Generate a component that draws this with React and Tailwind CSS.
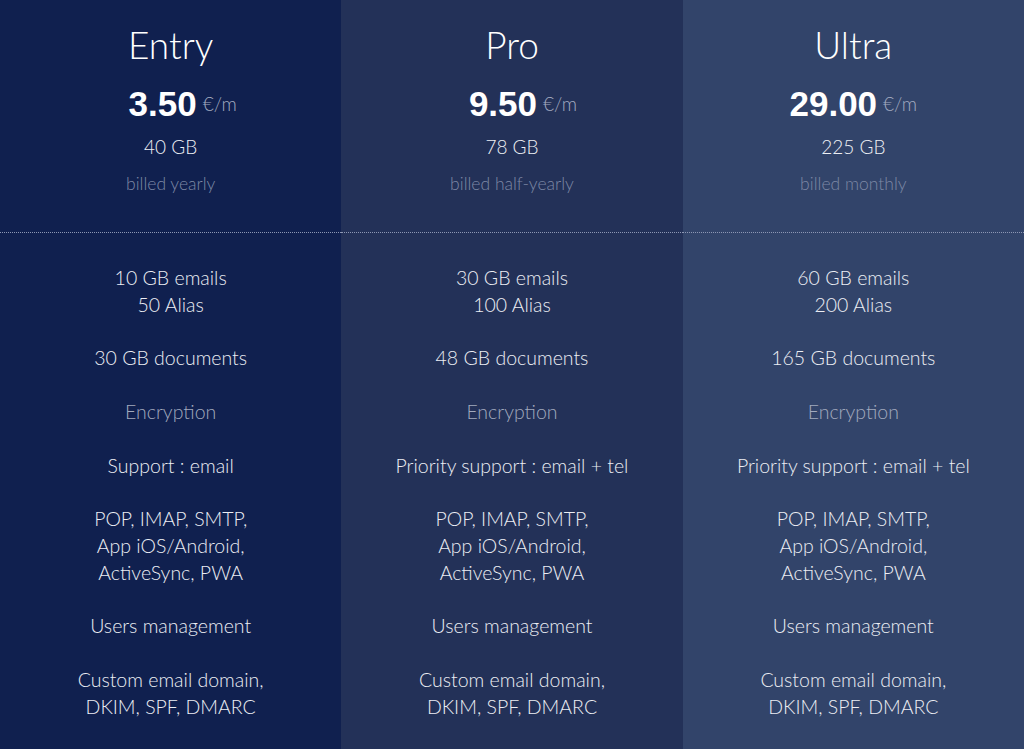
const PLANS = [
  {
    name: 'Entry',
    price: '3.50',
    storage: '40 GB',
    billing: 'billed yearly',
    bg: 'bg-[#10204f]',
    pricePad: 'pl-[24px]',
    emails: '10 GB emails',
    alias: '50 Alias',
    docs: '30 GB documents',
    support: 'Support : email',
  },
  {
    name: 'Pro',
    price: '9.50',
    storage: '78 GB',
    billing: 'billed half-yearly',
    bg: 'bg-[#233158]',
    pricePad: 'pl-[22px]',
    emails: '30 GB emails',
    alias: '100 Alias',
    docs: '48 GB documents',
    support: 'Priority support : email + tel',
  },
  {
    name: 'Ultra',
    price: '29.00',
    storage: '225 GB',
    billing: 'billed monthly',
    bg: 'bg-[#32446a]',
    pricePad: 'pl-0',
    emails: '60 GB emails',
    alias: '200 Alias',
    docs: '165 GB documents',
    support: 'Priority support : email + tel',
  },
];

const PlanColumn = ({ plan }) => (
  <div className={`flex-1 flex flex-col ${plan.bg}`}>
    {/* header */}
    <div className="flex flex-col items-center pt-[22px] h-[232px]">
      <h2 className="text-[37px] leading-[46px] font-light text-white">{plan.name}</h2>
      <div className={`mt-[16px] flex items-center gap-[6px] ${plan.pricePad}`}>
        <span className="font-['Liberation_Sans',Arial,sans-serif] font-bold text-[35px] leading-[40px] text-white">{plan.price}</span>
        <span className="text-[19px] leading-[24px] text-[#a3abc0] font-light">€/m</span>
      </div>
      <p className="mt-[11px] text-[19px] leading-[24px] text-[#eef0f5] font-light">{plan.storage}</p>
      <p className="mt-[13px] text-[17.5px] leading-[24px] text-[#7d88a5] font-light">{plan.billing}</p>
    </div>

    <div className="border-t border-dotted border-[#8d97b3]"></div>

    {/* features */}
    <div className="flex flex-col items-center text-center text-[19.5px] leading-[26.8px] font-light text-[#eceef4] pt-[32px] gap-[26.8px]">
      <p>{plan.emails}<br />{plan.alias}</p>
      <p>{plan.docs}</p>
      <p className="text-[#a2aabe]">Encryption</p>
      <p>{plan.support}</p>
      <p>POP, IMAP, SMTP,<br />App iOS/Android,<br />ActiveSync, PWA</p>
      <p>Users management</p>
      <p>Custom email domain,<br />DKIM, SPF, DMARC</p>
    </div>
  </div>
);

export default function App() {
  return (
    <div className="w-[1024px] h-[749px] overflow-hidden flex font-['Lato',sans-serif] bg-[#10204f]">
      {PLANS.map((p) => (
        <PlanColumn key={p.name} plan={p} />
      ))}
    </div>
  );
}
